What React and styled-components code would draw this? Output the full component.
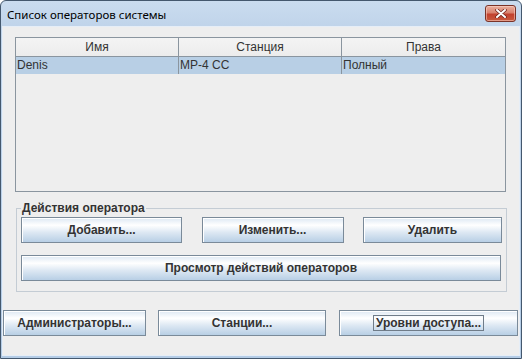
import React from 'react';
import styled, { createGlobalStyle } from 'styled-components';

const GlobalStyle = createGlobalStyle`
  html, body {
    margin: 0;
    padding: 0;
    background: #ffffff;
  }
  body {
    width: 522px;
    height: 359px;
    overflow: hidden;
  }
  * {
    box-sizing: border-box;
  }
`;

const operators = [{ name: 'Denis', station: 'MP-4 CC', rights: 'Полный' }];

const App = () => {
  return (
    <>
      <GlobalStyle />
      <Window>
        <TitleBar>
          <Title>Список операторов системы</Title>
          <CloseButton>
            <svg width="12" height="9" viewBox="0 0 12 9">
              <path d="M2 1 L10 8 M10 1 L2 8" stroke="#6b1f18" strokeWidth="3.4" strokeLinecap="round" />
              <path d="M2 1 L10 8 M10 1 L2 8" stroke="#ffffff" strokeWidth="2" strokeLinecap="round" />
            </svg>
          </CloseButton>
        </TitleBar>

        <Client>
          <TableBox>
            <HeaderRow>
              <HeaderCell>Имя</HeaderCell>
              <HeaderCell>Станция</HeaderCell>
              <HeaderCell last>Права</HeaderCell>
            </HeaderRow>
            {operators.map((op) => (
              <Row key={op.name} selected>
                <Cell>{op.name}</Cell>
                <Cell>{op.station}</Cell>
                <Cell last>{op.rights}</Cell>
              </Row>
            ))}
          </TableBox>

          <GroupBox>
            <Legend>Действия оператора</Legend>
            <ButtonRow>
              <Button width={161}>Добавить...</Button>
              <Button width={142}>Изменить...</Button>
              <Button width={139}>Удалить</Button>
            </ButtonRow>
            <ButtonRow>
              <Button width={480}>Просмотр действий операторов</Button>
            </ButtonRow>
          </GroupBox>

          <BottomRow>
            <Button width={143}>Администраторы...</Button>
            <Button width={168}>Станции...</Button>
            <Button width={179}>
              <Focus>Уровни доступа...</Focus>
            </Button>
          </BottomRow>
        </Client>
      </Window>
    </>
  );
};

export default App;

const Window = styled.div`
  width: 522px;
  height: 359px;
  border: 1px solid #44586e;
  border-radius: 6px 6px 0 0;
  background: linear-gradient(180deg, #cadcef 0px, #c0d4ea 26px, #b4cce6 100%);
  display: flex;
  flex-direction: column;
  font-family: 'Liberation Sans', Arial, sans-serif;
`;

const TitleBar = styled.div`
  height: 26px;
  display: flex;
  justify-content: space-between;
  align-items: flex-start;
  padding: 0 5px 0 6px;
`;

const Title = styled.div`
  font-family: 'Noto Sans', 'Open Sans', sans-serif;
  font-size: 11.5px;
  line-height: 27px;
  color: #000000;
`;

const CloseButton = styled.div`
  margin-top: 4px;
  width: 31px;
  height: 17px;
  border: 1px solid #7a3328;
  border-radius: 3px;
  background: linear-gradient(180deg, #eab0a0 0%, #d9826e 45%, #c2412e 55%, #c85a3e 100%);
  box-shadow: inset 0 0 0 1px rgba(255, 220, 210, 0.5);
  display: flex;
  align-items: center;
  justify-content: center;
`;

const Client = styled.div`
  flex: 1;
  margin: 0 2px 3px 2px;
  background: #eeeeee;
  display: flex;
  flex-direction: column;
  padding-top: 10px;
  box-shadow: 0 0 0 1px #e6eef7;
`;

const TableBox = styled.div`
  margin: 0 13px 0 12px;
  height: 155px;
  border: 1px solid #8a959f;
  background: #eeeeee;
`;

const HeaderRow = styled.div`
  display: grid;
  grid-template-columns: 163px 163px 1fr;
  height: 19px;
  border-bottom: 1px solid #8a959f;
  background: linear-gradient(180deg, #f4f4f4, #ececec);
`;

const HeaderCell = styled.div`
  font-size: 12px;
  line-height: 18px;
  color: #333333;
  text-align: center;
  border-right: ${({ last }) => (last ? 'none' : '1px solid #8a959f')};
`;

const Row = styled.div`
  display: grid;
  grid-template-columns: 163px 163px 1fr;
  height: 17px;
  background: ${({ selected }) => (selected ? '#b8cfe5' : '#ffffff')};
`;

const Cell = styled.div`
  font-size: 12px;
  line-height: 16px;
  color: #333333;
  padding-left: 1px;
  border-right: ${({ last }) => (last ? 'none' : '1px solid #8a959f')};
`;

const GroupBox = styled.fieldset`
  margin: 9px 12px 0 13px;
  padding: 0 4px 10px 4px;
  border: 1px solid #c4ccd4;
  display: flex;
  flex-direction: column;
  gap: 12px;
  min-width: 0;
`;

const Legend = styled.legend`
  padding: 0 1px;
  margin: 0;
  font-size: 12px;
  font-weight: bold;
  line-height: 14px;
  color: #333333;
`;

const ButtonRow = styled.div`
  display: flex;
  justify-content: space-between;
  &:first-of-type {
    margin-top: 2px;
  }
`;

const Button = styled.div`
  width: ${({ width }) => width}px;
  height: 26px;
  border: 1px solid #7a8a99;
  background: linear-gradient(
    180deg,
    #dde8f3 0%,
    #ffffff 30%,
    #dde8f3 60%,
    #b8cfe5 100%
  );
  box-shadow: inset 1px 1px 0 #ffffff;
  display: flex;
  align-items: center;
  justify-content: center;
  font-size: 12px;
  font-weight: bold;
  color: #333333;
  white-space: nowrap;
`;

const Focus = styled.span`
  border: 1px solid #6f7c89;
  padding: 0 2px;
  line-height: 14px;
`;

const BottomRow = styled.div`
  margin: 18px 1px 0 0;
  display: flex;
  gap: 12px;
  & > :last-child {
    margin-left: 1px;
  }
`;
